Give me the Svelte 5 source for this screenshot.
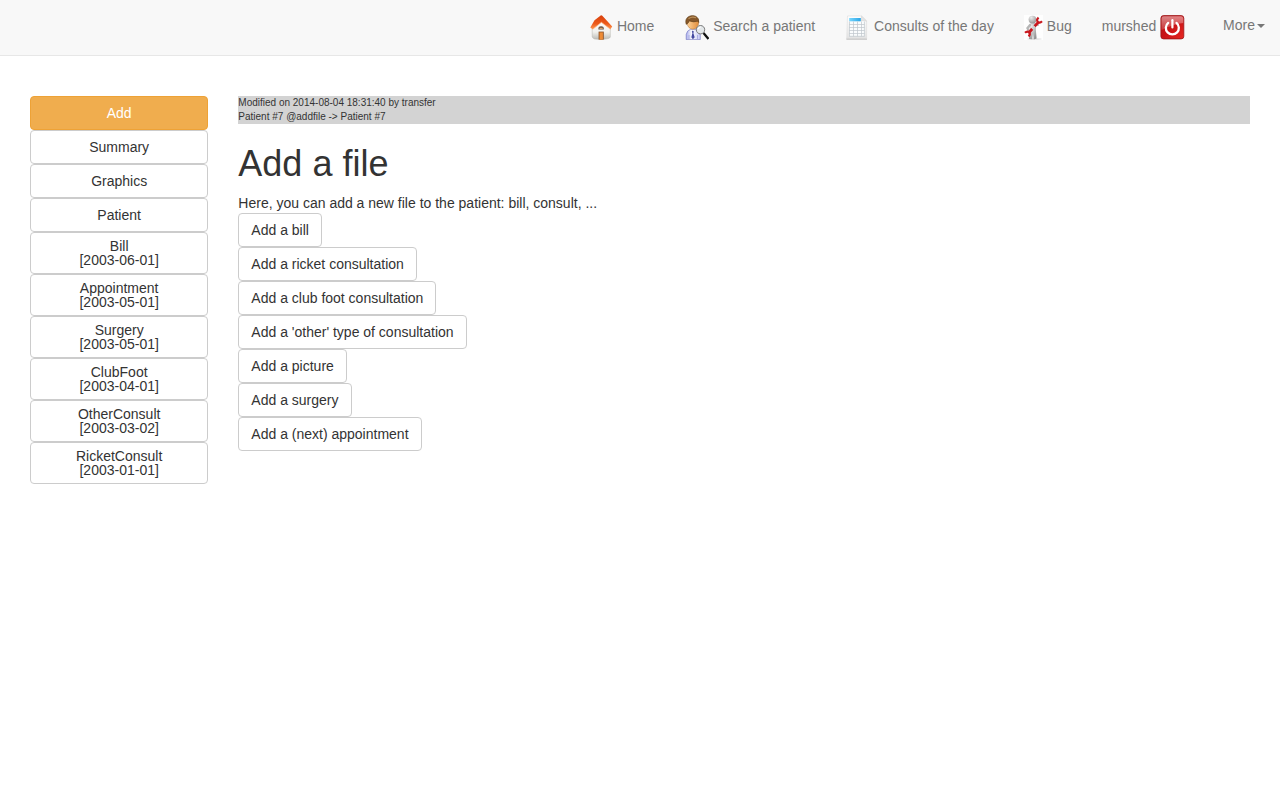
<script>
  const nav = [
    { icon: 'home', label: 'Home' },
    { icon: 'search', label: 'Search a patient' },
    { icon: 'sheet', label: 'Consults of the day' },
    { icon: 'bug', label: 'Bug' },
    { icon: 'power', label: 'murshed', after: true }
  ];
  const files = [
    { name: 'Add', active: true },
    { name: 'Summary' },
    { name: 'Graphics' },
    { name: 'Patient' },
    { name: 'Bill', date: '2003-06-01' },
    { name: 'Appointment', date: '2003-05-01' },
    { name: 'Surgery', date: '2003-05-01' },
    { name: 'ClubFoot', date: '2003-04-01' },
    { name: 'OtherConsult', date: '2003-03-02' },
    { name: 'RicketConsult', date: '2003-01-01' }
  ];
  const actions = [
    'Add a bill',
    'Add a ricket consultation',
    'Add a club foot consultation',
    "Add a 'other' type of consultation",
    'Add a picture',
    'Add a surgery',
    'Add a (next) appointment'
  ];
</script>

{#snippet icon(name)}
  {#if name === 'home'}
    <svg class="icon" width="25" height="25" viewBox="0 0 25 25">
      <defs>
        <linearGradient id="wall" x1="0" y1="0" x2="0" y2="1"><stop offset="0" stop-color="#fff" /><stop offset=".6" stop-color="#f1f1ee" /><stop offset="1" stop-color="#b9b9b4" /></linearGradient>
        <linearGradient id="roof" x1="0" y1="0" x2="0" y2="1"><stop offset="0" stop-color="#d8400c" /><stop offset=".6" stop-color="#ec5a1b" /><stop offset="1" stop-color="#ff9a55" /></linearGradient>
      </defs>
      <path d="M4.2 13 8.5 8 13 5.5 22.3 12.5V22Q22 23.2 20 23.6L14 24.6 6.6 24Q4.4 23.4 4.2 21.5Z" fill="url(#wall)" stroke="#b3b2ad" stroke-width=".5" />
      <path d="M13 .2Q14 .2 15 1.6L24.2 11.6 22.4 14.2 13.4 7.3 4.7 14.3 2.3 12.4 6.5 5.2Z" fill="url(#roof)" />
      <path d="M4.7 14.3 13.4 7.3 22.4 14.2" fill="none" stroke="#ffb27c" stroke-width=".7" />
      <path d="M10.4 13.6Q10.4 11.2 13.1 11.2T15.8 13.6V14.4H10.4Z" fill="#62544c" />
      <path d="M11.5 12.8h3.2v1.2h-3.2z" fill="#d9a26d" />
      <path d="M10.6 16.6h5.2v8h-5.2z" fill="#8d5329" />
      <path d="M11.5 17.4h3.4v7.2h-3.4z" fill="#ee8b35" />
    </svg>
  {:else if name === 'search'}
    <svg class="icon" width="25" height="25" viewBox="0 0 25 25">
      <defs>
        <linearGradient id="shirt" x1="0" x2="1"><stop offset="0" stop-color="#a9adec" /><stop offset=".4" stop-color="#fff" /><stop offset="1" stop-color="#c4c8f5" /></linearGradient>
        <linearGradient id="face" x1="0" x2="1"><stop offset="0" stop-color="#ffd399" /><stop offset="1" stop-color="#e08c3b" /></linearGradient>
      </defs>
      <path d="M2.2 24.6V19.5Q3 15.4 6.5 14.3H12Q16 15.5 16.3 20V24.6Z" fill="url(#shirt)" stroke="#6b70bd" stroke-width=".6" />
      <path d="M5 20v4M13.5 20v4" stroke="#8f94d4" stroke-width=".6" />
      <path d="m8.7 15.4 1.2 1.4-.6 1.2 1.4 4.2-1.8 2-1.6-2 1.2-4.2-.7-1.3Z" fill="#4348a0" />
      <ellipse cx="8.9" cy="8" rx="5.7" ry="6.2" fill="url(#face)" stroke="#ae7130" stroke-width=".5" />
      <path d="M2.2 9.4Q.5 3.8 4.8 1.4 8.5-.6 12.2 1.4 15.4 3.5 14.8 7.6L13.7 6.2Q9.5 7.7 5.4 5.9 4.3 8.6 2.2 9.4Z" fill="#85572a" stroke="#5b3b15" stroke-width=".5" />
      <path d="M4.5 3.7Q8 1 12 2.8" fill="none" stroke="#ba905a" stroke-width="1.2" />
      <path d="m19.5 18.1 5 5.9" stroke="#111" stroke-width="2.3" />
      <circle cx="16.5" cy="14.7" r="4.2" fill="#e4e8ea" stroke="#6d6d6d" stroke-width=".9" />
      <path d="M14.1 14.2q.5-2 2.5-2.1" fill="none" stroke="#fff" stroke-width="1.3" />
    </svg>
  {:else if name === 'sheet'}
    <svg class="icon" width="25" height="25" viewBox="0 0 25 25">
      <defs>
        <linearGradient id="paper" x1="0" y1="0" x2="0" y2="1"><stop offset="0" stop-color="#fff" /><stop offset="1" stop-color="#e2e2e2" /></linearGradient>
        <linearGradient id="head" x1="0" x2="1"><stop offset="0" stop-color="#78d7ff" /><stop offset="1" stop-color="#2ba5e5" /></linearGradient>
      </defs>
      <path d="M2.5 1H16.5L21.6 6V24.2H1.7Z" fill="url(#paper)" stroke="#dcdcdc" stroke-width=".6" />
      <path d="M1.4 24.2H22" stroke="#bdbdbd" stroke-width=".8" />
      <path d="M16.5 1 16 6H21.6Z" fill="#e4e4e4" stroke="#c9c9c9" stroke-width=".4" />
      <path d="M4.2 6.4h15.3v14.8H4.2z" fill="#fafcfd" />
      <path d="M4.2 3h11.6v3.3H4.2z" fill="url(#head)" />
      <path d="M4.2 9.5h15.3M4.2 12.5h15.3M4.2 15.5h15.3M4.2 18.5h15.3M4.2 21.3h15.3M4.5 6.5v14.8M8.5 6.5v14.8M12.5 6.5v14.8M16.5 6.5v14.8M19.4 6.5v14.8" stroke="#bfc6cb" stroke-width=".7" />
    </svg>
  {:else if name === 'bug'}
    <svg class="icon" width="19" height="25" viewBox="0 0 19 25">
      <defs>
        <radialGradient id="clay" cx=".35" cy=".25" r=".85"><stop offset="0" stop-color="#ececec" /><stop offset="1" stop-color="#8e8e8e" /></radialGradient>
      </defs>
      <path d="M0 0h19v25H0z" fill="#fefefe" />
      <ellipse cx="10.5" cy="24" rx="7.5" ry=".8" fill="#ddd" />
      <path d="M5.3 9.2Q8.6 6.8 12 8.7L11.8 14.3 12.6 23.6 9.8 24.4 9 18.5 8.2 24.2 5 24 5.8 15Z" fill="url(#clay)" />
      <path d="m6 10-2.6 3.2 1.6 3M11.6 9.8l2.3.2" fill="none" stroke="#b5b5b5" stroke-width="2.2" stroke-linecap="round" />
      <circle cx="8.5" cy="4.6" r="3.9" fill="url(#clay)" />
      <path d="M4.6 18 8.3 13.8M10.6 11.4 14.6 6.9" stroke="#c9181e" stroke-width="2.8" />
      <path d="M1 17.8Q3.2 15.6 5.2 17.4 6.7 19.2 4.6 21.4M18 6.3Q15.9 8.6 13.8 6.9 12 4.8 14.6 2.6" fill="none" stroke="#c9181e" stroke-width="2.2" />
      <path d="m8.3 13.8 2.3-2.4" stroke="#cfcfcf" stroke-width="2.4" />
    </svg>
  {:else}
    <svg class="icon" width="25" height="25" viewBox="0 0 25 25">
      <defs>
        <linearGradient id="red" x1="0" y1="0" x2="1" y2="1"><stop offset="0" stop-color="#b5161a" /><stop offset=".5" stop-color="#c91417" /><stop offset="1" stop-color="#e82822" /></linearGradient>
        <linearGradient id="gloss" x1="0" y1="0" x2="0" y2="1"><stop offset="0" stop-color="#fff" stop-opacity=".48" /><stop offset="1" stop-color="#fff" stop-opacity=".14" /></linearGradient>
      </defs>
      <rect x=".9" y=".6" width="22.9" height="23.3" rx="2.6" fill="url(#red)" stroke="#9b1417" stroke-width=".8" />
      <path d="M1.5 3.5Q1.5 1.2 3.8 1.2H21Q23.2 1.2 23.2 3.5V8Q14 9 1.5 15Z" fill="url(#gloss)" />
      <path d="M8.2 7.9A6.5 6.5 0 1 0 16.5 7.9" fill="none" stroke="#fff" stroke-width="2.3" stroke-linecap="round" />
      <path d="M12.4 5.2v7.3" stroke="#fff" stroke-width="2.2" stroke-linecap="round" />
    </svg>
  {/if}
{/snippet}

<nav>
  {#each nav as item}
    <a class="item" href="#top">{#if item.after}{item.label} {@render icon(item.icon)}{:else}{@render icon(item.icon)} {item.label}{/if}</a>
  {/each}
  <a class="more" href="#top">More<span class="caret"></span></a>
</nav>

<div class="page">
  <aside>
    {#each files as f}
      <button class:active={f.active} class:dated={f.date}>
        {f.name}{#if f.date}<br />[{f.date}]{/if}
      </button>
    {/each}
  </aside>
  <main>
    <div class="meta">Modified on 2014-08-04 18:31:40 by transfer<br />Patient #7 @addfile -&gt; Patient #7</div>
    <h1>Add a file</h1>
    <div>Here, you can add a new file to the patient: bill, consult, ...</div>
    <div class="actions">
      {#each actions as a}<button>{a}</button>{/each}
    </div>
  </main>
</div>

<style>
  :global(body) {
    background: #fff;
    color: #333;
    font: 14px/20px "Liberation Sans", Arial, sans-serif;
  }
  nav {
    box-sizing: border-box;
    height: 56px;
    display: flex;
    justify-content: flex-end;
    background: #f8f8f8;
    border-bottom: 1px solid #e7e7e7;
  }
  nav a {
    padding: 15px;
    color: #777;
    text-decoration: none;
    white-space: nowrap;
  }
  .more { margin-left: 8px; }
  .icon { vertical-align: middle; }
  .caret {
    display: inline-block;
    vertical-align: middle;
    margin-left: 2px;
    border-top: 4px solid #777;
    border-left: 4px solid transparent;
    border-right: 4px solid transparent;
  }
  .page {
    display: grid;
    grid-template-columns: 178.33px 1fr;
    gap: 30px;
    padding: 40px 30px;
  }
  aside { display: flex; flex-direction: column; }
  button {
    box-sizing: border-box;
    margin: 0;
    padding: 6px 12px;
    border: 1px solid #ccc;
    border-radius: 4px;
    background: #fff;
    color: #333;
    font: inherit;
    text-align: center;
  }
  .dated { line-height: 14px; }
  .active { background: #f0ad4e; border-color: #eea236; color: #fff; }
  .meta { background: lightgrey; font-size: 10px; line-height: 14px; }
  h1 { margin: 20px 0 10px; font-size: 36px; font-weight: 500; line-height: 39px; }
  .actions { display: flex; flex-direction: column; align-items: flex-start; }
</style>
